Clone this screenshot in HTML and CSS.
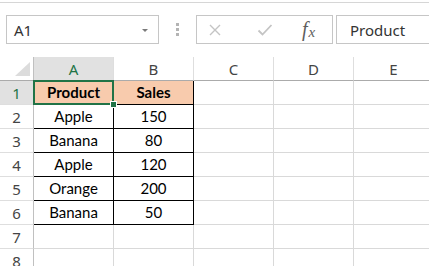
FILE: index.html
```html
<!DOCTYPE html>
<html>
<head>
<meta charset="utf-8">
<link rel="stylesheet" href="styles.css">
</head>
<body>
<div class="ribbon-edge"></div>
<div class="fbar">
  <div class="namebox"><span>A1</span><span class="caret"></span></div>
  <div class="grip"><i></i><i></i><i></i></div>
  <div class="btns">
    <svg class="ico" width="14" height="14" viewBox="0 0 14 14"><path d="M2 2 L12 12 M12 2 L2 12" stroke="#c4c4c4" stroke-width="1.4" fill="none"/></svg>
    <svg class="ico" width="16" height="14" viewBox="0 0 16 14"><path d="M1.5 7.5 L5.5 11.5 L14.5 2" stroke="#c4c4c4" stroke-width="1.8" fill="none"/></svg>
    <span class="fx"><i>f</i><i class="sub">x</i></span>
  </div>
  <div class="formula">Product</div>
</div>
<div class="sheet">
  <div class="cell corner"><span class="tri"></span></div>
  <div class="cell colh sel">A</div>
  <div class="cell colh">B</div>
  <div class="cell colh">C</div>
  <div class="cell colh">D</div>
  <div class="cell colh">E</div>

  <div class="cell rowh sel">1</div>
  <div class="cell data head active">Product<span class="handle"></span></div>
  <div class="cell data head">Sales</div>
  <div class="cell"></div><div class="cell"></div><div class="cell"></div>

  <div class="cell rowh">2</div>
  <div class="cell data">Apple</div><div class="cell data">150</div>
  <div class="cell"></div><div class="cell"></div><div class="cell"></div>

  <div class="cell rowh">3</div>
  <div class="cell data">Banana</div><div class="cell data">80</div>
  <div class="cell"></div><div class="cell"></div><div class="cell"></div>

  <div class="cell rowh">4</div>
  <div class="cell data">Apple</div><div class="cell data">120</div>
  <div class="cell"></div><div class="cell"></div><div class="cell"></div>

  <div class="cell rowh">5</div>
  <div class="cell data">Orange</div><div class="cell data">200</div>
  <div class="cell"></div><div class="cell"></div><div class="cell"></div>

  <div class="cell rowh">6</div>
  <div class="cell data">Banana</div><div class="cell data">50</div>
  <div class="cell"></div><div class="cell"></div><div class="cell"></div>

  <div class="cell rowh">7</div>
  <div class="cell"></div><div class="cell"></div>
  <div class="cell"></div><div class="cell"></div><div class="cell"></div>

  <div class="cell rowh">8</div>
  <div class="cell"></div><div class="cell"></div>
  <div class="cell"></div><div class="cell"></div><div class="cell"></div>
</div>
</body>
</html>
```
FILE: styles.css
```css
html, body {
  margin: 0;
  padding: 0;
  background: #ffffff;
  width: 429px;
  height: 266px;
  overflow: hidden;
}
body {
  font-family: "Noto Sans", "Open Sans", sans-serif;
  color: #333;
}
.ribbon-edge {
  height: 2px;
  border-bottom: 1px solid #d6d6d6;
}
.fbar {
  height: 54px;
  display: flex;
  align-items: flex-start;
  padding-top: 12px;
  padding-left: 6px;
  box-sizing: border-box;
}
.namebox {
  flex-shrink: 0;
  width: 153px;
  height: 29px;
  box-sizing: border-box;
  border: 1px solid #c6c6c6;
  display: flex;
  align-items: center;
  justify-content: space-between;
  padding: 0 10px 0 7px;
  font-size: 15px;
  color: #333;
}
.caret {
  width: 0;
  height: 0;
  border-left: 3px solid transparent;
  border-right: 3px solid transparent;
  border-top: 3px solid #7a7a7a;
  margin-top: 1px;
}
.grip {
  flex-shrink: 0;
  width: 37px;
  height: 29px;
  display: flex;
  flex-direction: column;
  align-items: center;
  justify-content: center;
  gap: 2px;
}
.grip i {
  display: block;
  width: 3px;
  height: 3px;
  background: #b4b4b4;
}
.btns {
  flex-shrink: 0;
  width: 137px;
  height: 29px;
  box-sizing: border-box;
  border: 1px solid #c6c6c6;
  display: flex;
  align-items: center;
  padding-left: 11px;
}
.btns .ico:nth-child(1) { margin-right: 35px; }
.btns .ico:nth-child(2) { margin-right: 29px; }
.fx {
  font-family: "Liberation Serif", "DejaVu Serif", serif;
  color: #5e5e5e;
  font-size: 20px;
  line-height: 1;
  margin-top: -2px;
}
.fx i { font-style: italic; }
.fx .sub {
  font-size: 15px;
  position: relative;
  top: 1px;
  margin-left: 1px;
}
.formula {
  flex-shrink: 0;
  margin-left: 3px;
  width: 110px;
  height: 29px;
  box-sizing: border-box;
  border: 1px solid #c6c6c6;
  font-size: 15px;
  color: #333;
  padding-left: 13px;
  display: flex;
  align-items: center;
}
.sheet {
  display: grid;
  grid-template-columns: 34px repeat(5, 80px);
  grid-auto-rows: 24px;
}
.cell {
  box-sizing: border-box;
  border-right: 1px solid #d9d9d9;
  border-bottom: 1px solid #d9d9d9;
  position: relative;
  font-family: "Lato", "Liberation Sans", sans-serif;
  font-size: 15px;
  color: #000;
  display: flex;
  align-items: flex-end;
  justify-content: center;
  padding-bottom: 3px;
}
.corner {
  border-right: 1px solid #c0c0c0;
  border-bottom: 1px solid #ababab;
}
.tri {
  position: absolute;
  right: 3px;
  bottom: 4px;
  width: 0;
  height: 0;
  border-left: 15px solid transparent;
  border-bottom: 14px solid #dcdcdc;
}
.colh {
  font-family: "Noto Sans", "Open Sans", sans-serif;
  font-size: 15px;
  color: #444;
  border-bottom: 1px solid #ababab;
  border-right: 1px solid #dedede;
  align-items: center;
  padding-bottom: 0;
  padding-top: 1px;
}
.rowh {
  font-family: "Noto Sans", "Open Sans", sans-serif;
  font-size: 15px;
  color: #444;
  border-right: 1px solid #c0c0c0;
  border-bottom: 1px solid #dedede;
  align-items: center;
  padding-bottom: 0;
  padding-top: 1px;
}
.sel {
  background: #e1e1e1;
  color: #217346;
}
.data {
  border-right: 1px solid #000;
  border-bottom: 1px solid #000;
}
.head {
  background: #f8cbad;
  font-weight: bold;
}
.active::before {
  content: "";
  position: absolute;
  left: -1px;
  top: -1px;
  right: -1px;
  bottom: -1px;
  border: 2px solid #217346;
  pointer-events: none;
}
.handle {
  position: absolute;
  right: -4px;
  bottom: -4px;
  width: 5px;
  height: 5px;
  background: #217346;
  border: 1px solid #ffffff;
  z-index: 2;
}
```
